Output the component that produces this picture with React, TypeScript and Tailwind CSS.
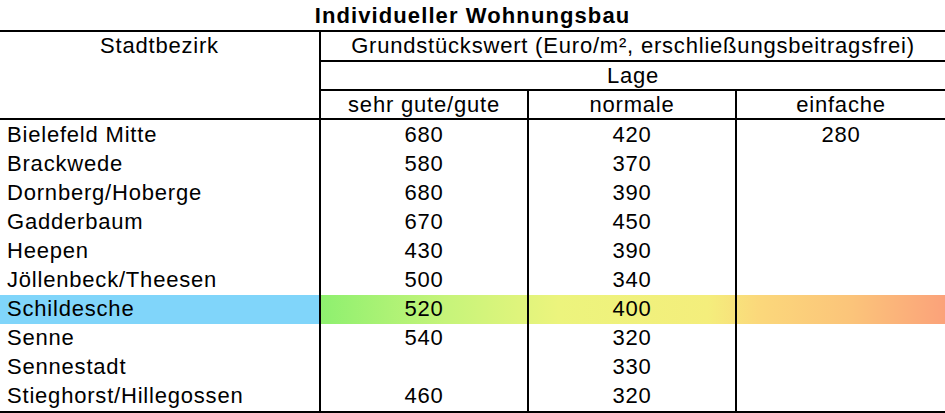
import React from "react";

const rows: [string, string, string, string][] = [
  ["Bielefeld Mitte", "680", "420", "280"],
  ["Brackwede", "580", "370", ""],
  ["Dornberg/Hoberge", "680", "390", ""],
  ["Gadderbaum", "670", "450", ""],
  ["Heepen", "430", "390", ""],
  ["Jöllenbeck/Theesen", "500", "340", ""],
  ["Schildesche", "520", "400", ""],
  ["Senne", "540", "320", ""],
  ["Sennestadt", "", "330", ""],
  ["Stieghorst/Hillegossen", "460", "320", ""],
];

export default function App() {
  return (
    <div
      className="w-[945px] h-[413px] bg-white text-black overflow-hidden"
      style={{ fontFamily: '"Liberation Sans", Arial, sans-serif' }}
    >
      <div className="h-[30px] flex items-center justify-center text-[22px] font-bold tracking-[1.1px] leading-none pt-[2px]">
        Individueller Wohnungsbau
      </div>
      <div className="border-t-2 border-b-2 border-black text-[22px] tracking-[0.8px] leading-none">
        {/* header */}
        <div className="flex border-b-2 border-black h-[88px]">
          <div className="w-[321px] border-r-2 border-black flex justify-center pt-[3px]">
            Stadtbezirk
          </div>
          <div className="flex-1 flex flex-col">
            <div className="h-[30px] border-b-2 border-black flex items-center justify-center">
              Grundstückswert (Euro/m², erschließungsbeitragsfrei)
            </div>
            <div className="h-[29px] border-b-2 border-black flex items-center justify-center">
              Lage
            </div>
            <div className="flex-1 flex">
              <div className="w-[208px] border-r-2 border-black flex items-center justify-center">
                sehr gute/gute
              </div>
              <div className="w-[208px] border-r-2 border-black flex items-center justify-center">
                normale
              </div>
              <div className="flex-1 flex items-center justify-center">einfache</div>
            </div>
          </div>
        </div>
        {/* data */}
        {rows.map((r, i) => {
          const hl = r[0] === "Schildesche";
          return (
            <div key={i} className="flex h-[29.1px]">
              <div
                className={
                  "w-[321px] border-r-2 border-black flex items-center pl-[7px] " +
                  (hl ? "bg-[#80d5fa]" : "")
                }
              >
                {r[0]}
              </div>
              <div
                className={
                  "flex-1 flex " +
                  (hl
                    ? "bg-[linear-gradient(to_right,#8ef06f_0%,#c6f47a_20%,#ecf47d_38%,#f4ee7c_62%,#fbd87b_70%,#fbc47a_85%,#fba27a_100%)]"
                    : "")
                }
              >
                <div className="w-[208px] border-r-2 border-black flex items-center justify-center">
                  {r[1]}
                </div>
                <div className="w-[208px] border-r-2 border-black flex items-center justify-center">
                  {r[2]}
                </div>
                <div className="flex-1 flex items-center justify-center">{r[3]}</div>
              </div>
            </div>
          );
        })}
      </div>
    </div>
  );
}
